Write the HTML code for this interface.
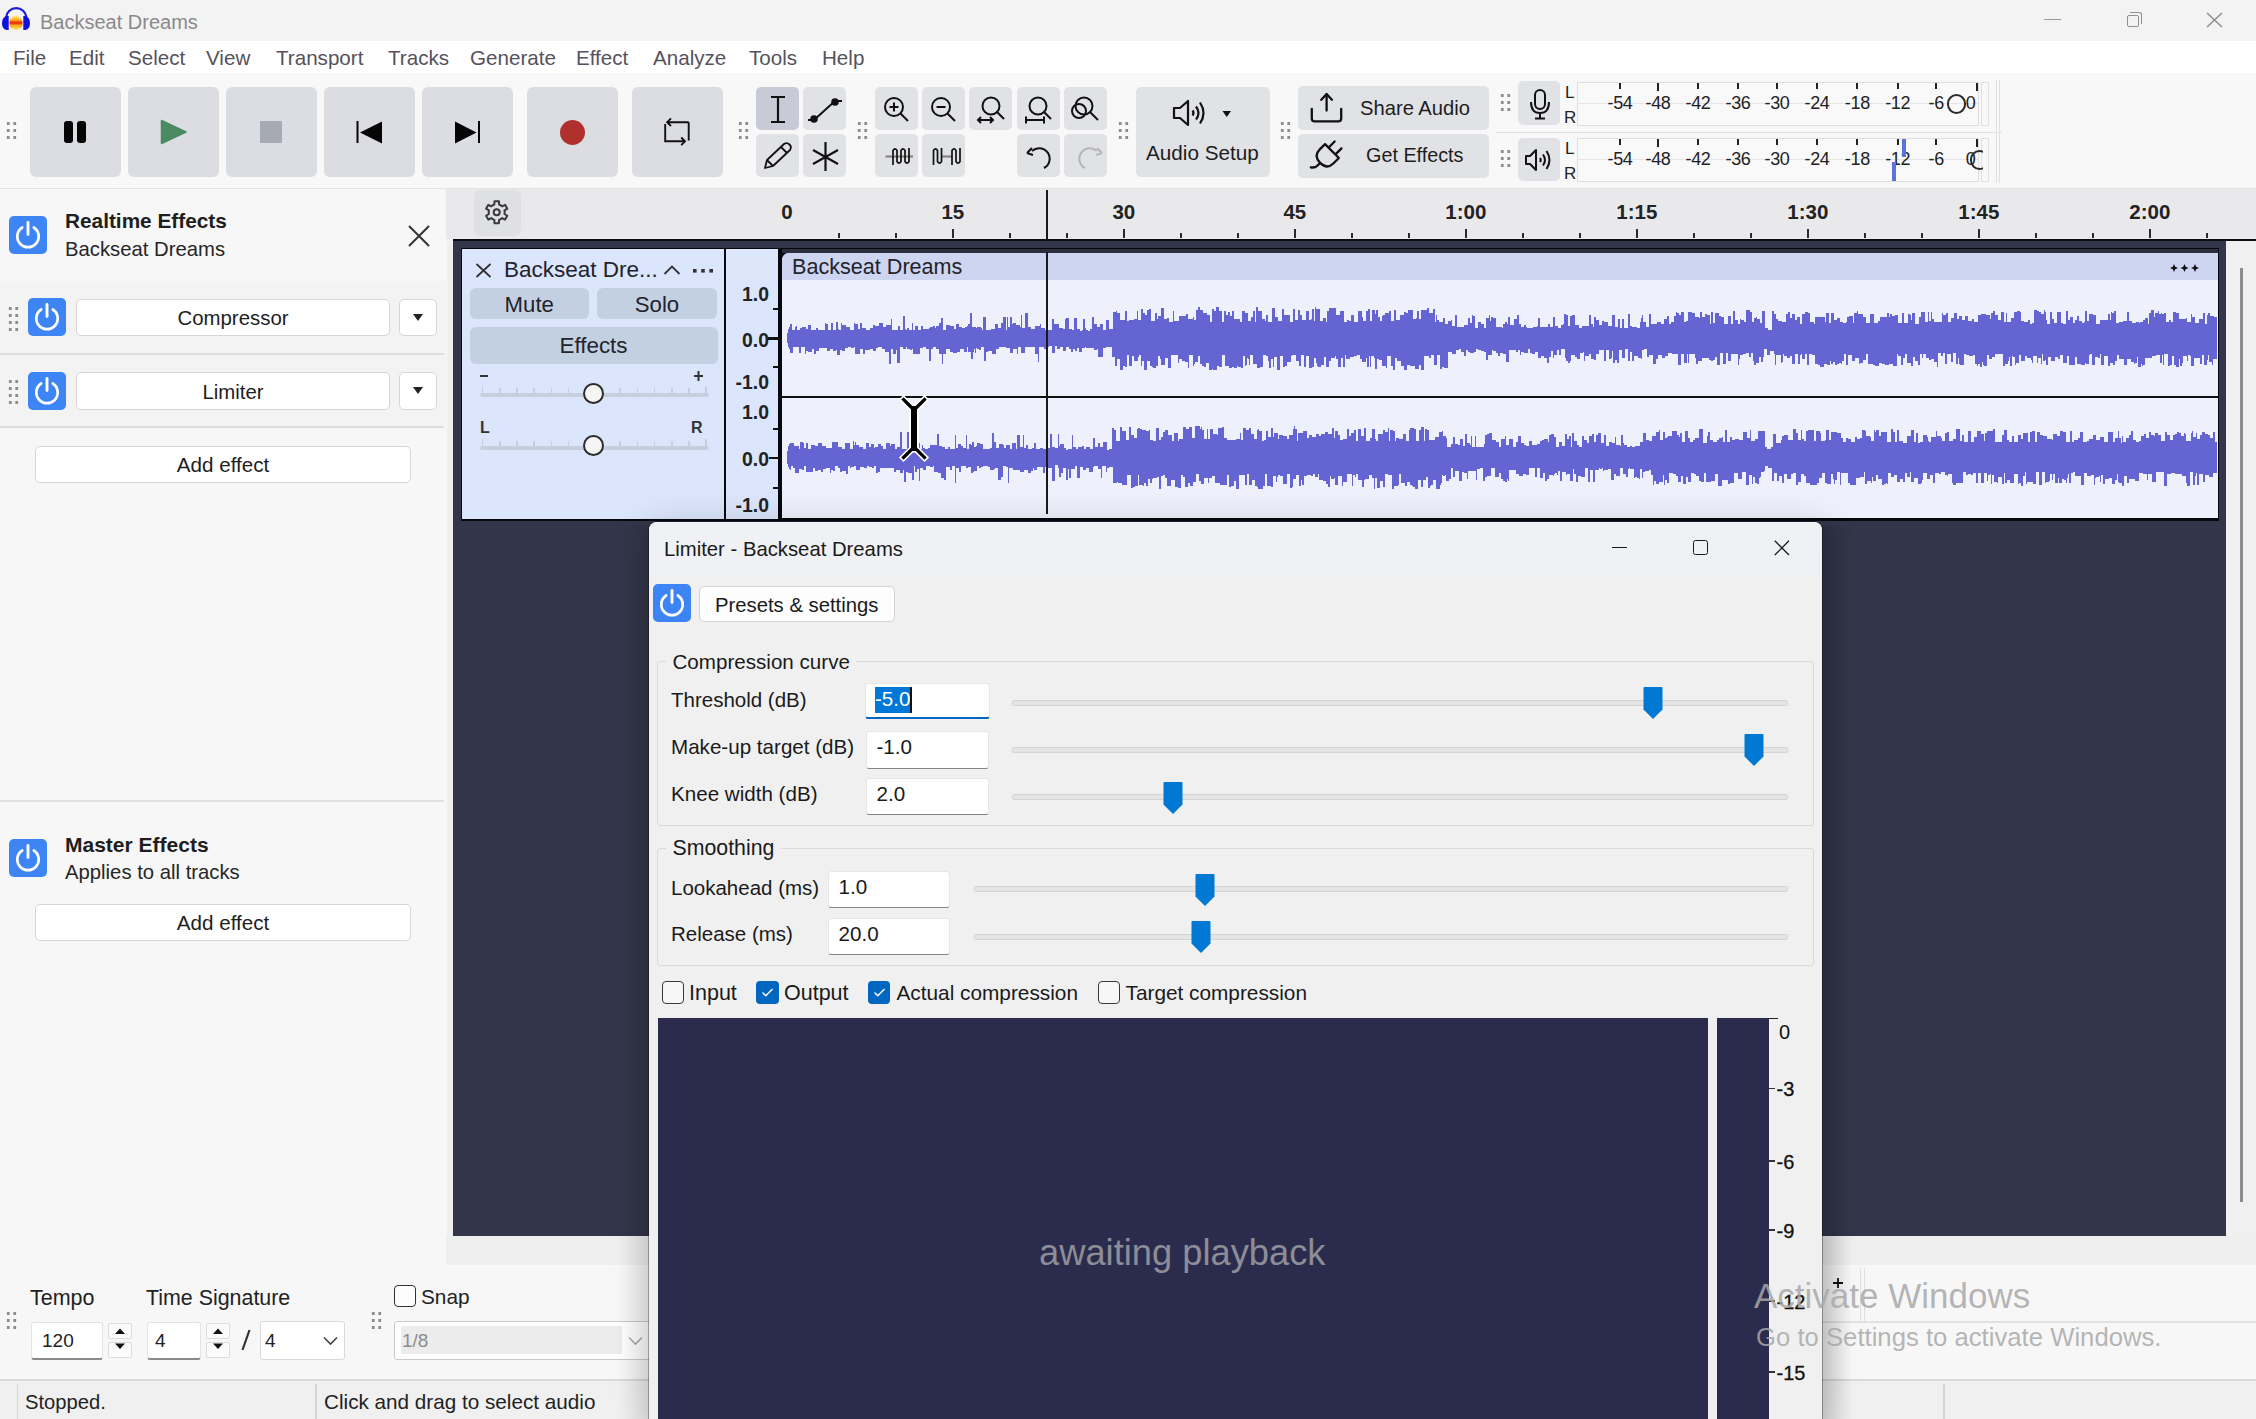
<!DOCTYPE html>
<html><head><meta charset="utf-8">
<style>
*{box-sizing:border-box;margin:0;padding:0}
html,body{width:2256px;height:1419px;overflow:hidden;background:#f7f7f7;font-family:"Liberation Sans",sans-serif;color:#1b1b1b}
.a{position:absolute}
.t{position:absolute;white-space:nowrap;font-size:20px;line-height:20px}
.btn{position:absolute;background:#dcdde2;border-radius:6px}
.tb{position:absolute;background:#e1e2e6;border-radius:5px}
.grip{position:absolute;width:12px;height:20px;background-image:radial-gradient(circle,#8d8d8d 1.6px,transparent 1.8px);background-size:6.5px 7px}
svg{position:absolute;overflow:visible}
.pw{background:#3d84f4;border-radius:5px}
.inp{background:#fff;border:1px solid #e3e3e3;border-bottom:2px solid #8a8a8a;border-radius:3px}
.spn{background:#fbfbfb;border:1px solid #dcdcdc;border-radius:2px}
.box{background:#fff;border:1.5px solid #d6d6d6;border-radius:5px}
</style></head><body>

<!-- TITLE BAR -->
<div class="a" style="left:0;top:0;width:2256px;height:41px;background:#f3f3f3"></div>
<svg style="left:0;top:0" width="32" height="36" viewBox="0 0 32 36">
  <defs><linearGradient id="wg" x1="0" y1="0" x2="0" y2="1"><stop offset="0" stop-color="#ffe66a"/><stop offset="0.35" stop-color="#f7a51e"/><stop offset="0.52" stop-color="#e81a0a"/><stop offset="0.68" stop-color="#f7a51e"/><stop offset="1" stop-color="#ffe66a"/></linearGradient></defs>
  <path d="M6 17.5 A10.3 10.5 0 0 1 26.5 17.5" fill="none" stroke="#1c1cd8" stroke-width="2.2"/>
  <path d="M8.7 16 H7.2 Q2 17 2 23 Q2 29.5 7.2 30 H8.7 Z" fill="#0f0fe0"/>
  <path d="M23.3 16 H24.8 Q30 17 30 23 Q30 29.5 24.8 30 H23.3 Z" fill="#0f0fe0"/>
  <path d="M9.5 21 L10.5 18 L11.5 20 L12.5 16 L13.5 19 L14.5 15 L15.5 18 L16.5 15 L17.5 19 L18.5 16 L19.5 20 L20.5 17 L21.5 20 L22.5 21 V25.5 L21.5 27.5 L19.5 29 L16 30 L12.5 29 L10.5 27.5 L9.5 25.5 Z" fill="url(#wg)"/>
</svg>
<div class="t" style="left:40px;top:12px;color:#8a8a8a">Backseat Dreams</div>
<div class="a" style="left:2044px;top:19px;width:17px;height:1px;background:#999"></div>
<div class="a" style="left:2127px;top:15px;width:12px;height:12px;border:1.5px solid #8f8f8f;border-radius:2px"></div>
<div class="a" style="left:2130px;top:12px;width:12px;height:12px;border-top:1.5px solid #8f8f8f;border-right:1.5px solid #8f8f8f;border-radius:0 3px 0 0"></div>
<svg style="left:2206px;top:12px" width="17" height="16"><path d="M1 1 L16 15 M16 1 L1 15" stroke="#8f8f8f" stroke-width="1.5"/></svg>

<!-- MENU BAR -->
<div class="a" style="left:0;top:41px;width:2256px;height:32px;background:#fff"></div>
<div class="t" style="left:13px;top:48px;font-size:20.6px;line-height:20.6px;color:#56525c">File</div>
<div class="t" style="left:69px;top:48px;font-size:20.6px;line-height:20.6px;color:#56525c">Edit</div>
<div class="t" style="left:128px;top:48px;font-size:20.6px;line-height:20.6px;color:#56525c">Select</div>
<div class="t" style="left:206px;top:48px;font-size:20.6px;line-height:20.6px;color:#56525c">View</div>
<div class="t" style="left:276px;top:48px;font-size:20.6px;line-height:20.6px;color:#56525c">Transport</div>
<div class="t" style="left:388px;top:48px;font-size:20.6px;line-height:20.6px;color:#56525c">Tracks</div>
<div class="t" style="left:470px;top:48px;font-size:20.6px;line-height:20.6px;color:#56525c">Generate</div>
<div class="t" style="left:576px;top:48px;font-size:20.6px;line-height:20.6px;color:#56525c">Effect</div>
<div class="t" style="left:653px;top:48px;font-size:20.6px;line-height:20.6px;color:#56525c">Analyze</div>
<div class="t" style="left:749px;top:48px;font-size:20.6px;line-height:20.6px;color:#56525c">Tools</div>
<div class="t" style="left:822px;top:48px;font-size:20.6px;line-height:20.6px;color:#56525c">Help</div>

<!-- TOOLBARS -->
<div class="a" style="left:0;top:73px;width:2256px;height:115px;background:#f8f8f9"></div>
<div class="a" style="left:0;top:188px;width:2256px;height:1px;background:#e2e2e4"></div>

<div class="grip" style="left:5px;top:120px"></div>
<div class="btn" style="left:30px;top:87px;width:91px;height:90px"></div>
<div class="btn" style="left:128px;top:87px;width:91px;height:90px"></div>
<div class="btn" style="left:226px;top:87px;width:91px;height:90px"></div>
<div class="btn" style="left:324px;top:87px;width:91px;height:90px"></div>
<div class="btn" style="left:422px;top:87px;width:91px;height:90px"></div>
<div class="btn" style="left:527px;top:87px;width:91px;height:90px"></div>
<div class="btn" style="left:632px;top:87px;width:91px;height:90px"></div>
<!-- pause -->
<div class="a" style="left:64px;top:121px;width:8.5px;height:22px;background:#050505;border-radius:3px"></div>
<div class="a" style="left:77px;top:121px;width:8.5px;height:22px;background:#050505;border-radius:3px"></div>
<!-- play -->
<svg style="left:160px;top:119px" width="28" height="26"><path d="M1.5 1.5 L26 13 L1.5 24.5 Z" fill="#4a8b63" stroke="#4a8b63" stroke-width="1.5" stroke-linejoin="round"/></svg>
<!-- stop -->
<div class="a" style="left:260px;top:121px;width:22px;height:22px;background:#a6aab3"></div>
<!-- skip start -->
<svg style="left:355px;top:120px" width="30" height="25"><rect x="1.5" y="1" width="2" height="22" fill="#050505"/><path d="M5 12.5 L27 1.5 V23.5 Z" fill="#050505"/></svg>
<!-- skip end -->
<svg style="left:453px;top:120px" width="30" height="25"><rect x="25" y="1" width="2" height="22" fill="#050505"/><path d="M2 1.5 L23.5 12.5 L2 23.5 Z" fill="#050505"/></svg>
<!-- record -->
<div class="a" style="left:559.5px;top:119.5px;width:25px;height:25px;background:#b0302e;border-radius:50%"></div>
<!-- loop -->
<svg style="left:660px;top:116px" width="34" height="34"><path d="M28.7 6.2 H7.2 M11 2.4 L7.2 6.2 L11 10 M28.7 6.2 V24.5 M5.2 8 V25.3 H25 M21.2 21.5 L25 25.3 L21.2 29.1" fill="none" stroke="#111" stroke-width="1.9"/></svg>

<div class="grip" style="left:737px;top:120px"></div>
<!-- tools -->
<div class="tb" style="left:756px;top:87px;width:43px;height:43px;background:#c8cbd6"></div>
<div class="tb" style="left:803px;top:87px;width:43px;height:43px"></div>
<div class="tb" style="left:756px;top:134px;width:43px;height:43px"></div>
<div class="tb" style="left:803px;top:134px;width:43px;height:43px"></div>
<svg style="left:768px;top:95px" width="20" height="30"><path d="M3 2 H17 M10 2 V27 M3 27 H17" stroke="#111" stroke-width="2.2" fill="none"/></svg>
<svg style="left:806px;top:96px" width="38" height="28"><path d="M2 24 H8 L29 5 H36" stroke="#111" stroke-width="2" fill="none"/><circle cx="8" cy="23" r="3.8" fill="#111"/><circle cx="29" cy="6" r="3.8" fill="#111"/></svg>
<svg style="left:762px;top:141px" width="32" height="30"><path d="M3 27 L5 19 L22 3 Q25 1 27.5 3.5 Q30 6 28 9 L11 25 Z M5 19 L11 25 M19 6 L25 12" stroke="#111" stroke-width="1.8" fill="none" stroke-linejoin="round"/></svg>
<svg style="left:811px;top:141px" width="30" height="32"><path d="M14.5 1 V30 M2 9 L27 23 M27 9 L2 23" stroke="#111" stroke-width="2.2" fill="none"/></svg>

<div class="grip" style="left:856px;top:120px"></div>
<!-- zoom group -->
<div class="tb" style="left:875px;top:87px;width:43px;height:43px"></div>
<div class="tb" style="left:922px;top:87px;width:43px;height:43px"></div>
<div class="tb" style="left:969px;top:87px;width:43px;height:43px"></div>
<div class="tb" style="left:1017px;top:87px;width:43px;height:43px"></div>
<div class="tb" style="left:1064px;top:87px;width:43px;height:43px"></div>
<div class="tb" style="left:875px;top:134px;width:43px;height:43px"></div>
<div class="tb" style="left:922px;top:134px;width:43px;height:43px"></div>
<div class="tb" style="left:1017px;top:134px;width:43px;height:43px"></div>
<div class="tb" style="left:1064px;top:134px;width:43px;height:43px"></div>
<svg style="left:882px;top:96px" width="30" height="30"><circle cx="12" cy="11" r="9" fill="none" stroke="#111" stroke-width="2"/><path d="M18.5 17.5 L26 25 M7.5 11 H16.5 M12 6.5 V15.5" stroke="#111" stroke-width="2" fill="none"/></svg>
<svg style="left:929px;top:96px" width="30" height="30"><circle cx="12" cy="11" r="9" fill="none" stroke="#111" stroke-width="2"/><path d="M18.5 17.5 L26 25 M7.5 11 H16.5" stroke="#111" stroke-width="2" fill="none"/></svg>
<svg style="left:976px;top:96px" width="32" height="30"><circle cx="15" cy="10" r="8.5" fill="none" stroke="#111" stroke-width="2"/><path d="M21 16 L28 23 M2 24 H17 M5 21 L2 24 L5 27 M14 21 L17 24 L14 27" stroke="#111" stroke-width="2" fill="none"/></svg>
<svg style="left:1023px;top:96px" width="32" height="30"><circle cx="15" cy="10" r="8.5" fill="none" stroke="#111" stroke-width="2"/><path d="M21 16 L28 23 M3 24 H21 M3 20.5 V27.5 M21 20.5 V27.5" stroke="#111" stroke-width="2" fill="none"/></svg>
<svg style="left:1070px;top:96px" width="32" height="30"><circle cx="14" cy="10" r="8.5" fill="none" stroke="#111" stroke-width="2"/><path d="M20 16 L28 24" stroke="#111" stroke-width="2"/><circle cx="9" cy="15" r="7" fill="none" stroke="#111" stroke-width="2"/></svg>
<svg style="left:883px;top:145px" width="32" height="22"><path d="M2.5 11.5 H30" stroke="#858585" stroke-width="2.2"/><path d="M10 20 V5.5 Q12 2.2 14 5.5 V16.5 Q16 19.8 18 16.5 V5.5 Q20 2.2 22 5.5 V16.5 Q24 19.8 26 16.5 V3" stroke="#111" stroke-width="1.7" fill="none"/></svg>
<svg style="left:930px;top:145px" width="32" height="22"><path d="M11.5 11.5 H22" stroke="#858585" stroke-width="2.2"/><path d="M3.5 20 V5.5 Q5.5 2.2 7.5 5.5 V16.5 Q9.5 19.8 11.5 16.5 V3 M22 20 V5.5 Q24 2.2 26 5.5 V16.5 Q28 19.8 30 16.5 V3" stroke="#111" stroke-width="1.7" fill="none"/></svg>
<svg style="left:1025px;top:142px" width="32" height="28"><path d="M7 9 A10.5 10.5 0 1 1 19 26" fill="none" stroke="#111" stroke-width="2"/><path d="M2 11 L7 6 M2 11 L8 13" stroke="#111" stroke-width="2" fill="none"/></svg>
<svg style="left:1072px;top:142px" width="32" height="28"><path d="M25 9 A10.5 10.5 0 1 0 13 26" fill="none" stroke="#b6b6b8" stroke-width="2"/><path d="M30 11 L25 6 M30 11 L24 13" stroke="#b6b6b8" stroke-width="2" fill="none"/></svg>

<div class="grip" style="left:1117px;top:120px"></div>
<!-- audio setup -->
<div class="tb" style="left:1136px;top:87px;width:134px;height:90px"></div>
<svg style="left:1171px;top:98px" width="64" height="32"><path d="M3 10 H9 L17 3 V27 L9 20 H3 Z" fill="none" stroke="#111" stroke-width="2.2" stroke-linejoin="round"/><path d="M21.5 12.5 Q23.5 15 21.5 17.5 M25 8.5 Q30 15 25 21.5 M29 4.5 Q36 15 29 25.5" fill="none" stroke="#111" stroke-width="2.2"/><path d="M51.5 13 H60 L55.75 19 Z" fill="#111"/></svg>
<div class="t" style="left:1146px;top:143px;font-size:20.7px;line-height:20.7px;color:#1d1d1d">Audio Setup</div>

<div class="grip" style="left:1279px;top:120px"></div>
<!-- share / get effects -->
<div class="tb" style="left:1298px;top:86px;width:191px;height:44px"></div>
<div class="tb" style="left:1298px;top:134px;width:191px;height:44px"></div>
<svg style="left:1309px;top:91px" width="36" height="34"><path d="M2.8 18 V27.5 Q2.8 30.3 5.6 30.3 H29.4 Q32.2 30.3 32.2 27.5 V18 M17.6 3.5 V19.5" fill="none" stroke="#111" stroke-width="2.3" stroke-linecap="round"/><path d="M12.3 8.8 L17.6 3 L22.9 8.8" fill="none" stroke="#111" stroke-width="2.3" stroke-linecap="round" stroke-linejoin="round"/></svg>
<div class="t" style="left:1360px;top:98px;font-size:20.2px;line-height:20.2px;color:#1d1d1d">Share Audio</div>
<svg style="left:1308px;top:136px" width="38" height="38"><g transform="translate(21.5 17.5) rotate(45) scale(1.15)" fill="none" stroke="#111" stroke-width="2" stroke-linecap="round" stroke-linejoin="round"><path d="M-8.5 -3 H8.5 V3.5 Q8.5 11.5 0 11.5 Q-8.5 11.5 -8.5 3.5 Z M-4.2 -3.5 V-10.5 M4.2 -3.5 V-10.5 M0 11.5 V15 Q0 18 -3 20"/></g></svg>
<div class="t" style="left:1366px;top:146px;font-size:19.8px;line-height:19.8px;color:#1d1d1d">Get Effects</div>

<div class="a" style="left:1496px;top:132px;width:506px;height:1px;background:#e2e2e2"></div>
<div class="grip" style="left:1499px;top:92px"></div>
<div class="grip" style="left:1499px;top:148px"></div>
<div class="tb" style="left:1518px;top:81px;width:42px;height:44px"></div>
<div class="tb" style="left:1518px;top:138px;width:42px;height:43px"></div>
<svg style="left:1529px;top:88px" width="22" height="32"><rect x="6" y="2" width="10" height="19" rx="5" fill="none" stroke="#111" stroke-width="2"/><path d="M2 14 Q2 25 11 25 Q20 25 20 14 M11 25 V30 M6 30.5 H16" fill="none" stroke="#111" stroke-width="2"/></svg>
<svg style="left:1524px;top:148px" width="32" height="24"><path d="M2 8 H6 L12 2 V22 L6 16 H2 Z" fill="none" stroke="#111" stroke-width="2" stroke-linejoin="round"/><path d="M16 10 Q17.5 12 16 14 M19 6.5 Q23 12 19 17.5 M22.5 3 Q28.5 12 22.5 21" fill="none" stroke="#111" stroke-width="2"/></svg>
<div class="a" style="left:1577px;top:82px;width:402px;height:44px;border:1.5px solid #dedede;background:#f9f9fa"></div>
<div class="a" style="left:1981px;top:82px;width:8px;height:44px;border:1.5px solid #e2e2e2"></div>
<div class="a" style="left:1578px;top:102.9px;width:400px;height:1.5px;background:#e6e6e6"></div>
<div class="t" style="left:1565px;top:84px;font-size:17px;line-height:17px;color:#222">L</div>
<div class="t" style="left:1564px;top:109px;font-size:17px;line-height:17px;color:#222">R</div>
<div class="a" style="left:1619px;top:83px;width:2px;height:6px;background:#222"></div>
<div class="t" style="left:1580px;width:80px;text-align:center;top:94px;font-size:18px;line-height:18px;color:#222;letter-spacing:-0.3px">-54</div>
<div class="a" style="left:1657px;top:83px;width:2px;height:8px;background:#222"></div>
<div class="t" style="left:1618px;width:80px;text-align:center;top:94px;font-size:18px;line-height:18px;color:#222;letter-spacing:-0.3px">-48</div>
<div class="a" style="left:1697px;top:83px;width:2px;height:6px;background:#222"></div>
<div class="t" style="left:1658px;width:80px;text-align:center;top:94px;font-size:18px;line-height:18px;color:#222;letter-spacing:-0.3px">-42</div>
<div class="a" style="left:1737px;top:83px;width:2px;height:6px;background:#222"></div>
<div class="t" style="left:1698px;width:80px;text-align:center;top:94px;font-size:18px;line-height:18px;color:#222;letter-spacing:-0.3px">-36</div>
<div class="a" style="left:1776px;top:83px;width:2px;height:6px;background:#222"></div>
<div class="t" style="left:1737px;width:80px;text-align:center;top:94px;font-size:18px;line-height:18px;color:#222;letter-spacing:-0.3px">-30</div>
<div class="a" style="left:1816px;top:83px;width:2px;height:6px;background:#222"></div>
<div class="t" style="left:1777px;width:80px;text-align:center;top:94px;font-size:18px;line-height:18px;color:#222;letter-spacing:-0.3px">-24</div>
<div class="a" style="left:1856.4px;top:83px;width:2px;height:6px;background:#222"></div>
<div class="t" style="left:1817.4px;width:80px;text-align:center;top:94px;font-size:18px;line-height:18px;color:#222;letter-spacing:-0.3px">-18</div>
<div class="a" style="left:1896.7px;top:83px;width:2px;height:6px;background:#222"></div>
<div class="t" style="left:1857.7px;width:80px;text-align:center;top:94px;font-size:18px;line-height:18px;color:#222;letter-spacing:-0.3px">-12</div>
<div class="a" style="left:1935.3px;top:83px;width:2px;height:6px;background:#222"></div>
<div class="t" style="left:1896.3px;width:80px;text-align:center;top:94px;font-size:18px;line-height:18px;color:#222;letter-spacing:-0.3px">-6</div>
<div class="a" style="left:1975.5px;top:83px;width:2px;height:8px;background:#222"></div>
<div class="t" style="left:1930.5px;width:80px;text-align:center;top:94px;font-size:18px;line-height:18px;color:#222;letter-spacing:-0.3px">0</div>
<div class="a" style="left:1577px;top:137.5px;width:402px;height:44.0px;border:1.5px solid #dedede;background:#f9f9fa"></div>
<div class="a" style="left:1981px;top:137.5px;width:8px;height:44.0px;border:1.5px solid #e2e2e2"></div>
<div class="a" style="left:1578px;top:158.5px;width:400px;height:1.5px;background:#e6e6e6"></div>
<div class="t" style="left:1565px;top:139.5px;font-size:17px;line-height:17px;color:#222">L</div>
<div class="t" style="left:1564px;top:164.5px;font-size:17px;line-height:17px;color:#222">R</div>
<div class="a" style="left:1619px;top:138.5px;width:2px;height:6px;background:#222"></div>
<div class="t" style="left:1580px;width:80px;text-align:center;top:149.5px;font-size:18px;line-height:18px;color:#222;letter-spacing:-0.3px">-54</div>
<div class="a" style="left:1657px;top:138.5px;width:2px;height:8px;background:#222"></div>
<div class="t" style="left:1618px;width:80px;text-align:center;top:149.5px;font-size:18px;line-height:18px;color:#222;letter-spacing:-0.3px">-48</div>
<div class="a" style="left:1697px;top:138.5px;width:2px;height:6px;background:#222"></div>
<div class="t" style="left:1658px;width:80px;text-align:center;top:149.5px;font-size:18px;line-height:18px;color:#222;letter-spacing:-0.3px">-42</div>
<div class="a" style="left:1737px;top:138.5px;width:2px;height:6px;background:#222"></div>
<div class="t" style="left:1698px;width:80px;text-align:center;top:149.5px;font-size:18px;line-height:18px;color:#222;letter-spacing:-0.3px">-36</div>
<div class="a" style="left:1776px;top:138.5px;width:2px;height:6px;background:#222"></div>
<div class="t" style="left:1737px;width:80px;text-align:center;top:149.5px;font-size:18px;line-height:18px;color:#222;letter-spacing:-0.3px">-30</div>
<div class="a" style="left:1816px;top:138.5px;width:2px;height:6px;background:#222"></div>
<div class="t" style="left:1777px;width:80px;text-align:center;top:149.5px;font-size:18px;line-height:18px;color:#222;letter-spacing:-0.3px">-24</div>
<div class="a" style="left:1856.4px;top:138.5px;width:2px;height:6px;background:#222"></div>
<div class="t" style="left:1817.4px;width:80px;text-align:center;top:149.5px;font-size:18px;line-height:18px;color:#222;letter-spacing:-0.3px">-18</div>
<div class="a" style="left:1896.7px;top:138.5px;width:2px;height:6px;background:#222"></div>
<div class="t" style="left:1857.7px;width:80px;text-align:center;top:149.5px;font-size:18px;line-height:18px;color:#222;letter-spacing:-0.3px">-12</div>
<div class="a" style="left:1935.3px;top:138.5px;width:2px;height:6px;background:#222"></div>
<div class="t" style="left:1896.3px;width:80px;text-align:center;top:149.5px;font-size:18px;line-height:18px;color:#222;letter-spacing:-0.3px">-6</div>
<div class="a" style="left:1975.5px;top:138.5px;width:2px;height:8px;background:#222"></div>
<div class="t" style="left:1930.5px;width:80px;text-align:center;top:149.5px;font-size:18px;line-height:18px;color:#222;letter-spacing:-0.3px">0</div>
<div class="a" style="left:1946.5px;top:94px;width:19.5px;height:19.5px;border:2px solid #2a2a2a;border-radius:50%"></div>
<div class="a" style="left:1902.4px;top:139px;width:3.5px;height:18px;background:#5d72da"></div>
<div class="a" style="left:1892px;top:162px;width:3.5px;height:18.5px;background:#5d72da"></div>
<div style="position:absolute;left:1960px;top:140px;width:23px;height:40px;overflow:hidden"><div class="a" style="left:9.5px;top:10px;width:19.5px;height:19.5px;border:2px solid #2a2a2a;border-radius:50%"></div></div>
<div class="a" style="left:1996px;top:80px;width:1px;height:103px;background:#e0e0e0"></div>
<div class="a" style="left:1999px;top:80px;width:1px;height:103px;background:#e0e0e0"></div>


<!-- LEFT PANEL -->
<div class="a" style="left:0;top:189px;width:446px;height:1076px;background:#f7f7f7"></div>

<div class="a" style="left:0;top:281px;width:446px;height:146px;background:#f3f3f3"></div>
<!-- header -->
<div class="a pw" style="left:9px;top:216px;width:38px;height:38px"><svg style="left:0;top:0" width="38" height="38"><path d="M13.2 11.5 A10.7 10.7 0 1 0 24.8 11.5" fill="none" stroke="#fff" stroke-width="2.7" stroke-linecap="round"/><path d="M19 6.5 V18.5" stroke="#fff" stroke-width="2.9" stroke-linecap="round"/></svg></div>
<div class="t" style="left:65px;top:211px;font-size:20.8px;line-height:20.8px;font-weight:bold;color:#1e1e1e">Realtime Effects</div>
<div class="t" style="left:65px;top:239px;font-size:20.3px;line-height:20.3px;color:#262626">Backseat Dreams</div>
<svg style="left:407px;top:224px" width="24" height="24"><path d="M2 2 L22 22 M22 2 L2 22" stroke="#333" stroke-width="2"/></svg>
<!-- compressor row -->
<div class="grip" style="left:7px;top:305px;height:26px"></div>
<div class="a pw" style="left:28px;top:298px;width:38px;height:38px"><svg style="left:0;top:0" width="38" height="38"><path d="M13.2 11.5 A10.7 10.7 0 1 0 24.8 11.5" fill="none" stroke="#fff" stroke-width="2.7" stroke-linecap="round"/><path d="M19 6.5 V18.5" stroke="#fff" stroke-width="2.9" stroke-linecap="round"/></svg></div>
<div class="a box" style="left:76px;top:299px;width:314px;height:37px"></div>
<div class="t" style="left:76px;width:314px;text-align:center;top:308px;font-size:20.4px;line-height:20.4px;color:#1e1e1e">Compressor</div>
<div class="a box" style="left:399px;top:299px;width:38px;height:37px"></div>
<svg style="left:413px;top:314px" width="11" height="8"><path d="M0 0 H10 L5 7 Z" fill="#222"/></svg>
<div class="a" style="left:0;top:353px;width:444px;height:1.5px;background:#dedede"></div>
<!-- limiter row -->
<div class="grip" style="left:7px;top:378px;height:26px"></div>
<div class="a pw" style="left:28px;top:372px;width:38px;height:38px"><svg style="left:0;top:0" width="38" height="38"><path d="M13.2 11.5 A10.7 10.7 0 1 0 24.8 11.5" fill="none" stroke="#fff" stroke-width="2.7" stroke-linecap="round"/><path d="M19 6.5 V18.5" stroke="#fff" stroke-width="2.9" stroke-linecap="round"/></svg></div>
<div class="a box" style="left:76px;top:372px;width:314px;height:38px"></div>
<div class="t" style="left:76px;width:314px;text-align:center;top:382px;font-size:20.4px;line-height:20.4px;color:#1e1e1e">Limiter</div>
<div class="a box" style="left:399px;top:372px;width:38px;height:38px"></div>
<svg style="left:413px;top:387px" width="11" height="8"><path d="M0 0 H10 L5 7 Z" fill="#222"/></svg>
<div class="a" style="left:0;top:426px;width:444px;height:1.5px;background:#dedede"></div>
<!-- add effect -->
<div class="a box" style="left:35px;top:446px;width:376px;height:37px"></div>
<div class="t" style="left:35px;width:376px;text-align:center;top:455px;font-size:20.6px;line-height:20.6px;color:#1e1e1e">Add effect</div>
<!-- master -->
<div class="a" style="left:0;top:800px;width:444px;height:1.5px;background:#e2e2e2"></div>
<div class="a pw" style="left:9px;top:839px;width:38px;height:38px"><svg style="left:0;top:0" width="38" height="38"><path d="M13.2 11.5 A10.7 10.7 0 1 0 24.8 11.5" fill="none" stroke="#fff" stroke-width="2.7" stroke-linecap="round"/><path d="M19 6.5 V18.5" stroke="#fff" stroke-width="2.9" stroke-linecap="round"/></svg></div>
<div class="t" style="left:65px;top:834px;font-size:21px;line-height:21px;font-weight:bold;color:#1e1e1e">Master Effects</div>
<div class="t" style="left:65px;top:862px;font-size:20.3px;line-height:20.3px;color:#262626">Applies to all tracks</div>
<div class="a box" style="left:35px;top:904px;width:376px;height:37px"></div>
<div class="t" style="left:35px;width:376px;text-align:center;top:913px;font-size:20.6px;line-height:20.6px;color:#1e1e1e">Add effect</div>


<!-- RULER -->
<div class="a" style="left:446px;top:189px;width:1810px;height:50px;background:#e9e9eb"></div>
<div class="a" style="left:474px;top:190px;width:47px;height:46px;background:#dfe0e4;border-radius:6px"></div>
<svg style="left:474px;top:190px" width="47" height="46"><path d="M20.34 14.56 L20.47 11.22 L24.93 11.22 L25.06 14.56 L26.70 15.27 L28.14 16.33 L31.09 14.78 L33.32 18.64 L30.50 20.43 L30.70 22.20 L30.50 23.97 L33.32 25.76 L31.09 29.62 L28.14 28.07 L26.70 29.13 L25.06 29.84 L24.93 33.18 L20.47 33.18 L20.34 29.84 L18.70 29.13 L17.26 28.07 L14.31 29.62 L12.08 25.76 L14.90 23.97 L14.70 22.20 L14.90 20.43 L12.08 18.64 L14.31 14.78 L17.26 16.33 L18.70 15.27 Z" fill="none" stroke="#3a3a3a" stroke-width="2" stroke-linejoin="round"/><circle cx="22.69999999999999" cy="22.19999999999999" r="3" fill="none" stroke="#3a3a3a" stroke-width="2"/></svg>
<div class="t" style="left:781.3px;top:202px;font-size:20.5px;line-height:20.5px;font-weight:bold;color:#222">0</div>
<div class="a" style="left:837.8px;top:232.5px;width:2px;height:5.5px;background:#2a2a2a"></div>
<div class="a" style="left:894.8px;top:232.5px;width:2px;height:5.5px;background:#2a2a2a"></div>
<div class="a" style="left:951.8px;top:229px;width:2px;height:9px;background:#2a2a2a"></div>
<div class="t" style="left:892.8px;width:120px;text-align:center;top:202px;font-size:20.5px;line-height:20.5px;font-weight:bold;color:#222">15</div>
<div class="a" style="left:1008.8px;top:232.5px;width:2px;height:5.5px;background:#2a2a2a"></div>
<div class="a" style="left:1065.8px;top:232.5px;width:2px;height:5.5px;background:#2a2a2a"></div>
<div class="a" style="left:1122.8px;top:229px;width:2px;height:9px;background:#2a2a2a"></div>
<div class="t" style="left:1063.8px;width:120px;text-align:center;top:202px;font-size:20.5px;line-height:20.5px;font-weight:bold;color:#222">30</div>
<div class="a" style="left:1179.8px;top:232.5px;width:2px;height:5.5px;background:#2a2a2a"></div>
<div class="a" style="left:1236.8px;top:232.5px;width:2px;height:5.5px;background:#2a2a2a"></div>
<div class="a" style="left:1293.8px;top:229px;width:2px;height:9px;background:#2a2a2a"></div>
<div class="t" style="left:1234.8px;width:120px;text-align:center;top:202px;font-size:20.5px;line-height:20.5px;font-weight:bold;color:#222">45</div>
<div class="a" style="left:1350.8px;top:232.5px;width:2px;height:5.5px;background:#2a2a2a"></div>
<div class="a" style="left:1407.8px;top:232.5px;width:2px;height:5.5px;background:#2a2a2a"></div>
<div class="a" style="left:1464.8px;top:229px;width:2px;height:9px;background:#2a2a2a"></div>
<div class="t" style="left:1405.8px;width:120px;text-align:center;top:202px;font-size:20.5px;line-height:20.5px;font-weight:bold;color:#222">1:00</div>
<div class="a" style="left:1521.8px;top:232.5px;width:2px;height:5.5px;background:#2a2a2a"></div>
<div class="a" style="left:1578.8px;top:232.5px;width:2px;height:5.5px;background:#2a2a2a"></div>
<div class="a" style="left:1635.8px;top:229px;width:2px;height:9px;background:#2a2a2a"></div>
<div class="t" style="left:1576.8px;width:120px;text-align:center;top:202px;font-size:20.5px;line-height:20.5px;font-weight:bold;color:#222">1:15</div>
<div class="a" style="left:1692.8px;top:232.5px;width:2px;height:5.5px;background:#2a2a2a"></div>
<div class="a" style="left:1749.8px;top:232.5px;width:2px;height:5.5px;background:#2a2a2a"></div>
<div class="a" style="left:1806.8px;top:229px;width:2px;height:9px;background:#2a2a2a"></div>
<div class="t" style="left:1747.8px;width:120px;text-align:center;top:202px;font-size:20.5px;line-height:20.5px;font-weight:bold;color:#222">1:30</div>
<div class="a" style="left:1863.8px;top:232.5px;width:2px;height:5.5px;background:#2a2a2a"></div>
<div class="a" style="left:1920.8px;top:232.5px;width:2px;height:5.5px;background:#2a2a2a"></div>
<div class="a" style="left:1977.8px;top:229px;width:2px;height:9px;background:#2a2a2a"></div>
<div class="t" style="left:1918.8px;width:120px;text-align:center;top:202px;font-size:20.5px;line-height:20.5px;font-weight:bold;color:#222">1:45</div>
<div class="a" style="left:2034.8px;top:232.5px;width:2px;height:5.5px;background:#2a2a2a"></div>
<div class="a" style="left:2091.8px;top:232.5px;width:2px;height:5.5px;background:#2a2a2a"></div>
<div class="a" style="left:2148.8px;top:229px;width:2px;height:9px;background:#2a2a2a"></div>
<div class="t" style="left:2089.8px;width:120px;text-align:center;top:202px;font-size:20.5px;line-height:20.5px;font-weight:bold;color:#222">2:00</div>
<div class="a" style="left:2205.8px;top:232.5px;width:2px;height:5.5px;background:#2a2a2a"></div>
<div class="a" style="left:1046px;top:190px;width:2.2px;height:50px;background:#1a1a1a"></div>

<!-- TRACK AREA -->
<div class="a" style="left:453px;top:239px;width:1773px;height:997px;background:#33364a"></div>
<div class="a" style="left:453px;top:239px;width:1803px;height:2px;background:#0c0d14"></div>
<div class="a" style="left:2226px;top:241px;width:30px;height:995px;background:#f0f0f0"></div>
<div class="a" style="left:2240px;top:268px;width:3px;height:934px;background:#8c8c8c"></div>
<div class="a" style="left:446px;top:1236px;width:1810px;height:29px;background:#efefef"></div>
<div class="a" style="left:446.5px;top:239px;width:6.5px;height:997px;background:#f0f0f0"></div>

<!-- track frame -->
<div class="a" style="left:460.5px;top:247.5px;width:1758.5px;height:273px;background:#08090e"></div>
<div class="a" style="left:462px;top:249.4px;width:262.2px;height:269.3px;background:#dbe5fb"></div>
<div class="a" style="left:726.3px;top:249.4px;width:52.2px;height:269.3px;background:#dbe5fb"></div>
<div class="a" style="left:726.3px;top:249.4px;width:52.2px;height:30px;background:#dde7fc"></div>
<div class="a" style="left:782px;top:249.4px;width:1435.7px;height:3.5px;background:#2b2e3d"></div>
<div class="a" style="left:782px;top:252.9px;width:1435.7px;height:265px;background:#eef0fc;border-top-left-radius:7px"></div>
<div class="a" style="left:782px;top:252.9px;width:1435.7px;height:27.5px;background:#cdd5f0;border-top-left-radius:7px"></div>
<svg style="left:0;top:0" width="2256" height="600"><path d="M787 338V333h1V329h1V327h1V324h2V330h3V327h1V326h1V330h3V328h2V327h4V329h2V325h3V330h5V328h2V330h7V323h1V324h2V330h3V323h2V330h3V322h2V329h1V330h2V323h1V325h4V327h4V330h4V323h1V324h3V329h2V323h2V328h4V330h4V328h3V325h2V326h4V323h4V327h3V325h5V319h1V330h6V326h2V330h3V316h2V329h1V330h1V328h2V330h3V323h1V330h2V326h3V330h3V326h2V329h6V328h1V327h3V326h2V328h1V326h3V323h2V318h2V330h3V325h4V326h4V329h2V324h3V327h3V328h3V327h2V326h1V324h2V313h2V327h4V328h1V327h4V328h1V330h1V317h3V330h5V329h4V324h3V328h3V323h2V317h3V330h1V317h1V327h2V317h2V324h1V323h3V325h4V327h1V315h1V328h3V313h3V327h3V329h4V326h5V324h1V328h4V330h7V319h2V324h5V328h4V329h2V319h1V318h3V329h3V330h2V318h3V329h3V331h2V330h1V319h2V328h1V330h2V331h2V329h2V317h2V324h3V327h3V324h3V330h3V320h3V329h4V312h3V311h1V313h3V320h5V311h2V321h2V320h5V319h3V311h1V320h3V309h2V313h2V315h2V310h2V309h2V321h4V313h2V319h1V316h3V308h3V319h3V318h2V322h4V311h1V321h5V316h7V314h2V319h5V317h1V320h2V310h2V307h2V310h3V313h4V315h3V322h2V309h2V311h2V307h3V311h3V322h2V311h2V315h2V312h2V316h2V311h2V319h6V322h2V311h3V313h3V321h3V317h2V311h2V322h1V307h2V311h4V319h3V321h1V315h2V322h4V308h3V317h3V321h4V309h2V315h6V322h3V309h2V320h3V310h2V315h2V320h4V311h3V320h2V319h1V309h2V321h1V307h1V309h4V321h3V318h3V322h1V311h2V308h7V315h4V311h4V322h3V320h2V321h2V315h3V322h4V311h4V317h1V321h3V311h2V309h2V321h2V310h3V314h1V310h2V317h2V321h2V316h1V315h2V313h4V311h2V321h3V310h2V320h4V315h4V312h2V313h2V310h5V319h3V318h1V311h2V319h2V310h6V308h2V313h4V309h2V322h1V315h1V320h2V322h4V318h2V324h3V321h3V320h1V326h3V315h2V327h7V325h4V318h2V323h2V315h1V316h2V328h3V322h3V324h3V328h2V318h3V315h1V321h1V317h2V318h3V327h6V328h1V324h2V322h2V324h1V317h2V325h4V319h3V315h2V324h2V327h3V325h2V327h1V328h6V327h4V326h1V318h2V327h8V324h2V327h3V317h2V326h3V328h3V325h2V324h1V314h2V315h2V326h2V316h2V315h3V325h4V328h3V326h7V315h2V324h2V327h1V317h2V320h3V325h3V321h2V322h4V326h4V315h3V327h3V319h2V328h2V319h2V328h4V314h2V326h2V327h5V328h3V322h1V318h1V315h1V322h3V327h3V314h2V324h6V322h4V324h3V319h3V316h2V324h2V322h3V316h2V312h1V313h2V315h2V312h3V322h2V321h2V312h4V313h3V317h4V318h1V312h2V317h3V314h2V315h3V324h1V312h2V323h2V313h4V316h2V317h3V324h4V316h3V324h2V311h2V320h3V324h2V319h1V320h3V322h2V310h4V312h2V322h2V318h2V317h1V319h3V323h2V311h3V328h3V330h4V311h2V314h2V319h2V321h4V322h4V314h2V312h2V318h2V314h3V320h2V317h3V324h2V314h3V312h3V313h2V322h4V324h1V317h10V322h1V313h3V323h2V313h3V320h3V318h3V322h3V323h3V322h1V317h2V316h4V323h1V313h3V311h1V314h5V317h3V323h4V314h4V323h4V321h2V317h7V313h2V317h1V314h2V316h3V315h3V323h4V313h2V323h4V314h2V315h1V320h1V313h3V324h4V317h2V312h4V322h3V312h1V321h2V312h1V319h2V322h8V313h1V315h3V313h2V322h3V318h3V313h3V319h2V316h3V320h3V316h3V321h4V319h2V322h4V315h3V314h5V315h4V319h1V313h2V311h2V315h3V320h3V312h3V322h2V313h1V322h4V318h3V312h3V311h3V312h1V321h3V322h4V320h2V324h2V323h2V310h3V311h2V312h2V314h3V310h1V312h1V320h1V324h3V312h2V319h2V323h3V312h4V323h2V324h3V311h2V320h2V317h3V323h2V320h2V316h2V321h3V323h2V322h1V311h2V321h2V314h4V315h3V324h4V320h8V314h2V320h1V312h1V313h2V311h2V323h3V322h4V321h4V312h2V321h3V323h4V322h3V323h1V322h3V320h2V318h3V324h1V313h2V310h3V317h1V313h3V311h1V314h2V313h1V314h2V313h2V322h3V320h2V322h2V312h3V313h3V319h7V318h1V322h4V314h1V317h3V323h4V319h4V313h2V324h2V315h1V313h2V316h4V317h3V359h-4V365h-1V362h-3V355h-1V360h-1V365h-3V355h-2V364h-2V358h-6V366h-3V356h-1V355h-2V361h-1V356h-4V363h-1V366h-2V359h-1V367h-3V365h-2V356h-2V365h-2V366h-2V354h-4V365h-1V355h-1V363h-2V355h-4V356h-4V358h-7V365h-2V366h-1V364h-1V367h-3V357h-1V363h-2V364h-1V362h-3V359h-4V365h-3V359h-5V355h-2V361h-2V365h-2V363h-3V366h-2V356h-4V365h-3V354h-1V358h-2V357h-3V365h-3V354h-2V355h-1V364h-3V363h-1V365h-4V364h-4V357h-2V365h-6V356h-2V363h-4V355h-3V359h-2V357h-3V361h-4V357h-3V365h-2V360h-1V361h-2V354h-1V364h-1V358h-3V363h-1V356h-4V363h-1V360h-1V358h-4V356h-2V361h-4V355h-2V363h-3V365h-1V357h-2V356h-1V366h-2V357h-1V361h-1V364h-3V366h-2V354h-8V357h-3V359h-3V355h-2V366h-3V365h-1V362h-1V367h-2V364h-2V366h-1V364h-2V355h-2V356h-4V355h-3V354h-2V365h-4V364h-1V358h-1V364h-2V353h-3V362h-2V354h-4V364h-2V353h-2V356h-2V353h-3V367h-1V362h-3V359h-3V360h-2V358h-3V354h-3V358h-1V354h-2V365h-2V361h-3V357h-2V366h-2V363h-4V354h-2V358h-2V365h-2V356h-3V354h-1V366h-4V364h-4V365h-4V364h-3V363h-3V366h-4V365h-2V364h-5V354h-2V360h-3V363h-3V364h-1V358h-4V361h-3V355h-4V365h-2V354h-2V361h-2V364h-1V363h-2V364h-2V365h-2V362h-2V364h-2V361h-1V365h-3V364h-3V367h-4V365h-2V364h-3V355h-3V354h-3V365h-2V354h-2V359h-3V354h-1V355h-1V364h-2V354h-3V364h-3V356h-2V358h-3V356h-3V354h-1V362h-1V363h-1V355h-5V365h-1V354h-1V351h-4V355h-3V349h-3V357h-1V362h-2V357h-2V363h-3V365h-2V361h-1V353h-2V357h-2V353h-3V354h-3V355h-3V359h-1V365h-1V354h-7V361h-3V353h-2V364h-3V353h-3V365h-3V357h-2V360h-2V361h-2V360h-2V358h-7V361h-4V364h-2V358h-1V354h-6V363h-1V354h-1V363h-3V354h-3V365h-3V354h-6V353h-4V356h-3V358h-3V355h-4V359h-2V364h-3V355h-4V357h-2V349h-3V350h-2V359h-1V358h-3V356h-4V361h-2V352h-2V361h-2V349h-3V358h-3V350h-3V363h-2V360h-2V363h-2V351h-1V358h-1V359h-2V350h-3V361h-2V350h-5V354h-3V360h-2V359h-3V354h-2V356h-4V361h-1V352h-1V353h-3V359h-3V357h-2V355h-4V361h-1V363h-2V361h-2V358h-1V349h-4V355h-2V350h-2V355h-3V358h-1V351h-2V357h-2V363h-2V358h-3V356h-3V358h-3V352h-3V354h-3V353h-2V349h-2V353h-4V352h-3V355h-1V350h-2V352h-2V350h-7V362h-3V354h-3V353h-3V356h-2V353h-2V351h-3V350h-1V355h-4V360h-2V352h-2V351h-3V350h-3V349h-2V352h-2V353h-4V352h-2V350h-2V356h-2V352h-3V349h-2V350h-3V354h-4V352h-4V368h-4V367h-2V369h-2V355h-3V365h-3V355h-3V358h-2V356h-5V370h-3V365h-2V369h-4V366h-5V365h-3V370h-3V366h-3V361h-4V358h-2V370h-2V366h-2V356h-4V368h-1V366h-4V360h-3V359h-2V369h-2V358h-1V356h-3V367h-1V356h-1V367h-2V358h-1V362h-4V359h-2V355h-3V356h-3V357h-4V359h-4V355h-1V367h-2V358h-2V367h-3V359h-2V356h-1V358h-4V361h-2V367h-3V357h-2V365h-3V367h-3V366h-1V363h-1V358h-2V367h-2V368h-3V356h-3V367h-2V355h-3V366h-2V361h-3V355h-4V356h-1V362h-4V366h-2V367h-2V356h-3V370h-3V357h-3V367h-1V359h-2V368h-2V361h-1V356h-2V355h-3V367h-3V368h-3V364h-4V355h-3V365h-1V359h-1V358h-1V365h-1V366h-1V356h-2V368h-2V367h-3V366h-1V368h-3V367h-2V368h-3V366h-4V355h-3V367h-3V366h-2V370h-4V369h-1V370h-3V363h-3V367h-2V366h-2V364h-2V356h-2V362h-3V364h-1V366h-1V355h-4V368h-1V362h-3V361h-3V359h-3V363h-1V355h-7V368h-3V358h-3V365h-4V359h-1V356h-2V366h-2V368h-3V367h-1V366h-2V361h-3V370h-3V361h-2V366h-1V355h-2V357h-1V361h-4V356h-2V366h-3V355h-2V367h-2V366h-2V370h-3V359h-3V366h-2V357h-3V347h-6V348h-3V357h-5V349h-1V350h-3V348h-8V347h-1V348h-3V352h-3V348h-2V351h-2V349h-2V352h-2V349h-2V347h-3V351h-3V347h-3V349h-3V346h-2V353h-3V346h-3V347h-3V349h-2V347h-5V362h-1V354h-3V347h-10V353h-4V347h-3V354h-1V349h-4V353h-3V348h-4V347h-7V349h-3V354h-4V351h-4V352h-2V361h-2V347h-3V350h-2V349h-2V348h-1V353h-1V349h-1V352h-1V359h-2V352h-3V347h-1V352h-3V349h-4V352h-3V353h-4V352h-3V349h-4V354h-3V364h-1V354h-3V349h-3V347h-3V349h-2V361h-2V349h-3V347h-3V348h-3V354h-7V349h-1V350h-2V349h-3V347h-1V349h-3V347h-3V363h-3V350h-1V354h-3V349h-2V364h-2V352h-4V349h-3V347h-4V348h-2V351h-3V349h-3V350h-5V354h-2V349h-3V354h-5V347h-1V348h-3V347h-3V348h-3V351h-3V350h-2V355h-3V350h-1V351h-3V349h-3V351h-3V348h-8V351h-3V354h-2V349h-2V352h-4V351h-2V354h-1V347h-4V353h-2V347h-6V353h-3V349h-1V347h-1V343h-1Z" fill="#6464d3"/><path d="M787 458V451h1V446h1V444h1V443h4V446h5V449h1V442h3V443h1V448h2V443h2V449h3V445h4V446h3V443h4V446h4V448h6V442h6V447h4V449h3V443h5V449h3V441h1V445h1V442h1V445h3V447h4V449h3V443h3V447h2V444h3V448h1V447h3V444h3V446h2V449h3V443h4V446h1V444h4V449h2V447h3V432h2V449h5V432h2V447h1V446h7V443h3V449h2V445h1V448h2V449h3V448h2V445h7V434h2V446h3V447h3V449h3V447h2V449h5V435h1V448h2V444h3V446h2V448h3V435h1V449h2V444h2V445h1V442h2V447h2V446h1V443h3V444h3V449h7V448h2V433h2V442h2V448h3V444h4V445h1V448h2V445h4V449h2V443h4V449h1V435h3V447h3V435h1V448h2V445h2V449h4V448h2V443h2V449h4V448h3V449h3V435h1V448h3V434h2V447h3V448h3V434h1V446h1V444h4V448h2V450h2V449h4V435h1V447h3V449h2V447h4V446h2V449h2V447h4V449h3V438h2V447h3V443h2V447h3V442h4V450h2V449h3V428h2V430h2V441h4V427h2V431h4V440h3V427h2V435h3V438h3V429h1V428h2V429h2V430h4V431h3V430h1V440h3V441h3V428h3V440h2V437h2V432h2V430h3V435h4V441h2V433h4V441h1V439h4V427h3V429h3V427h3V438h3V426h5V429h1V427h1V430h2V439h3V429h1V439h2V429h3V434h4V435h1V428h4V427h2V438h3V440h9V439h4V433h1V440h2V428h3V430h3V428h2V434h3V439h3V430h1V429h1V431h3V441h2V440h2V431h2V437h3V428h2V437h1V433h4V439h1V435h4V436h4V439h2V435h4V429h1V426h1V429h2V441h1V433h5V431h4V438h2V435h3V437h4V434h3V436h2V434h4V432h3V434h4V428h2V438h1V431h3V435h2V440h3V439h4V429h2V436h2V433h3V430h2V441h2V429h3V436h3V428h2V441h4V438h2V429h3V439h1V441h2V434h5V430h2V432h3V428h1V441h1V430h3V431h2V441h1V438h3V439h4V434h3V441h3V430h1V428h4V429h2V441h3V430h2V427h3V441h1V429h2V430h2V440h6V437h4V432h3V431h1V436h3V438h1V447h4V444h2V437h2V444h3V445h2V439h3V446h2V434h2V443h3V445h1V436h1V447h3V436h1V447h8V444h1V435h2V434h2V433h3V440h4V442h3V447h2V439h4V436h1V445h3V439h4V447h3V442h2V436h3V443h3V445h2V446h3V441h3V445h5V444h3V441h2V440h2V439h4V442h1V435h2V434h3V437h2V447h3V442h3V446h3V434h2V439h2V436h2V447h1V433h2V441h3V445h2V447h3V436h2V440h3V443h2V436h3V434h2V442h2V435h2V433h3V443h3V435h2V446h3V442h3V443h3V437h1V445h4V446h1V435h2V443h1V445h3V447h3V446h2V447h3V446h5V442h3V433h3V440h3V441h3V436h4V432h3V430h1V440h3V432h2V438h2V437h1V436h4V431h5V435h2V437h1V433h2V442h3V431h3V438h2V442h3V440h2V438h4V429h4V443h4V436h1V432h2V440h3V442h4V440h2V438h3V437h1V442h2V430h2V442h3V437h2V440h3V439h4V440h4V432h4V438h3V430h1V441h4V439h3V431h7V447h2V449h4V447h2V434h3V443h5V440h1V436h2V435h4V440h5V429h3V433h2V440h3V430h1V439h2V441h2V431h2V430h6V441h2V431h4V433h1V441h4V440h1V430h3V440h2V432h6V433h4V438h2V442h3V438h2V439h3V442h4V437h2V439h3V438h2V430h3V431h1V436h4V437h1V441h3V430h1V432h1V430h3V436h2V432h6V442h4V429h2V432h2V442h2V430h2V441h4V443h4V436h4V430h3V442h2V433h2V443h2V442h3V435h4V437h1V441h1V442h2V437h5V431h1V436h4V438h1V441h3V433h2V432h2V441h4V439h3V429h4V441h2V435h2V442h4V431h3V442h3V437h3V431h4V434h3V441h1V433h2V431h6V429h2V442h7V435h2V430h3V440h2V442h3V436h2V442h4V435h3V439h2V433h5V442h2V432h2V431h3V442h2V432h3V435h3V436h4V439h5V440h1V434h4V436h3V431h3V432h3V442h4V431h2V442h2V440h4V438h2V432h3V442h4V441h2V439h4V435h3V440h4V437h4V442h4V432h5V442h2V438h3V431h1V438h2V443h1V436h1V442h3V438h3V435h2V431h2V440h3V442h3V441h2V436h3V434h2V438h3V432h2V435h3V436h1V433h3V435h3V441h4V432h2V435h3V440h3V435h2V434h2V432h2V433h2V436h3V433h1V434h1V441h5V433h1V431h1V437h3V433h1V439h3V435h2V432h3V434h3V435h2V438h3V432h2V442h2V473h-4V477h-4V475h-4V482h-2V474h-4V485h-2V473h-1V476h-1V485h-2V472h-3V486h-3V483h-1V476h-4V474h-7V473h-4V474h-4V486h-3V472h-8V482h-4V474h-4V480h-1V474h-4V473h-4V481h-4V479h-6V483h-2V476h-3V486h-2V483h-3V482h-1V474h-1V480h-2V484h-3V478h-3V479h-4V484h-2V475h-2V482h-1V476h-1V477h-3V478h-1V485h-1V475h-3V476h-4V473h-3V485h-3V476h-6V472h-2V473h-2V483h-2V474h-1V478h-1V483h-1V480h-2V479h-2V483h-3V478h-1V483h-3V474h-2V480h-1V474h-2V481h-1V482h-3V483h-1V472h-3V485h-3V472h-3V484h-3V482h-6V484h-1V472h-1V476h-2V486h-2V483h-2V484h-1V474h-4V483h-4V480h-3V483h-2V473h-1V484h-2V477h-4V483h-1V482h-3V475h-2V484h-1V474h-1V475h-2V481h-1V473h-3V483h-3V473h-3V483h-2V473h-3V475h-2V474h-3V475h-2V472h-3V483h-7V485h-3V483h-1V474h-4V476h-1V475h-2V472h-4V474h-2V473h-4V483h-2V475h-3V479h-3V473h-4V480h-1V483h-1V484h-3V478h-4V482h-3V472h-1V477h-3V473h-2V482h-2V479h-3V482h-3V475h-3V477h-3V473h-3V484h-1V483h-1V484h-2V485h-2V479h-4V475h-2V481h-3V477h-1V483h-1V481h-4V484h-2V472h-1V477h-4V478h-4V485h-6V483h-2V473h-7V485h-1V472h-3V480h-2V484h-1V479h-1V474h-2V484h-4V483h-2V473h-3V478h-3V483h-2V485h-7V483h-4V476h-2V474h-3V482h-3V485h-2V473h-3V474h-2V479h-4V474h-3V483h-2V476h-3V481h-2V473h-3V481h-2V468h-4V466h-3V471h-1V472h-3V477h-1V478h-1V484h-2V483h-2V477h-2V484h-1V475h-3V485h-3V472h-4V479h-4V473h-4V483h-4V484h-2V480h-6V486h-4V474h-3V481h-4V482h-5V473h-2V482h-3V481h-2V476h-3V474h-2V473h-3V482h-3V477h-2V484h-3V476h-2V482h-3V476h-2V474h-3V473h-4V483h-2V480h-2V485h-1V475h-1V482h-4V484h-3V481h-2V485h-1V475h-2V470h-2V471h-4V472h-2V478h-1V469h-2V479h-1V478h-2V477h-2V478h-1V469h-4V468h-1V469h-1V477h-2V474h-3V468h-3V476h-4V474h-2V480h-3V469h-3V470h-4V471h-1V468h-1V469h-2V468h-1V470h-4V482h-2V470h-3V482h-2V468h-3V477h-4V476h-3V482h-2V474h-2V469h-1V481h-3V474h-3V475h-1V472h-4V481h-2V471h-2V475h-1V473h-2V474h-1V476h-1V475h-4V479h-2V481h-2V473h-2V478h-3V468h-3V477h-2V468h-6V475h-3V474h-3V476h-4V474h-3V470h-7V481h-1V479h-1V482h-2V481h-2V479h-2V473h-2V477h-4V468h-4V476h-4V477h-2V481h-2V468h-3V469h-3V480h-1V471h-8V479h-1V473h-3V472h-2V481h-3V471h-4V477h-2V468h-2V479h-2V481h-3V475h-1V476h-2V475h-1V483h-1V485h-1V489h-4V480h-3V485h-2V486h-1V488h-2V477h-2V480h-3V487h-2V480h-3V489h-3V487h-2V486h-1V485h-2V482h-3V486h-2V483h-4V474h-2V485h-1V486h-4V489h-2V475h-4V474h-3V487h-2V481h-3V488h-3V478h-2V489h-1V478h-2V475h-3V479h-4V480h-1V487h-2V480h-4V474h-2V477h-1V475h-2V486h-1V474h-5V482h-4V486h-1V476h-4V485h-3V478h-1V479h-3V476h-1V487h-2V484h-2V481h-3V480h-4V474h-1V477h-3V474h-2V476h-2V475h-4V476h-3V485h-2V480h-1V486h-2V475h-3V479h-3V487h-1V488h-2V474h-3V484h-4V476h-3V475h-2V477h-1V482h-1V476h-3V487h-2V486h-4V474h-2V486h-2V489h-5V487h-1V486h-2V480h-3V485h-3V474h-2V485h-2V475h-6V489h-3V481h-2V486h-3V487h-2V475h-2V485h-7V483h-5V476h-3V478h-3V483h-1V478h-4V484h-3V481h-2V474h-3V482h-3V486h-3V483h-2V487h-3V477h-2V475h-2V488h-3V487h-3V480h-4V486h-4V478h-2V475h-2V476h-2V489h-2V477h-2V478h-4V479h-1V483h-2V479h-2V486h-2V483h-2V486h-1V485h-4V475h-1V486h-3V487h-2V488h-2V475h-4V485h-5V483h-4V482h-1V483h-4V467h-4V468h-2V472h-1V466h-4V478h-1V469h-3V466h-4V467h-1V472h-4V468h-3V470h-3V467h-3V478h-3V466h-2V469h-4V478h-2V469h-1V480h-2V468h-3V473h-2V477h-2V468h-1V465h-3V481h-3V468h-4V471h-2V467h-1V473h-2V467h-6V470h-3V468h-1V471h-2V473h-3V470h-4V472h-4V470h-7V468h-4V483h-1V467h-2V466h-3V477h-2V480h-3V468h-3V469h-1V470h-4V467h-2V466h-5V467h-2V468h-2V466h-2V471h-3V472h-1V473h-2V467h-3V468h-2V466h-5V472h-2V468h-3V483h-1V466h-3V470h-2V467h-4V480h-2V478h-3V473h-3V472h-4V466h-1V467h-3V466h-4V470h-3V468h-3V481h-1V469h-2V472h-2V466h-1V480h-2V473h-4V472h-2V482h-2V470h-1V473h-3V470h-4V472h-2V468h-14V472h-2V473h-2V466h-2V468h-2V467h-3V466h-2V468h-3V467h-4V470h-4V466h-2V467h-3V468h-1V466h-2V474h-2V471h-4V472h-2V468h-2V466h-3V471h-2V470h-2V473h-1V468h-4V469h-3V472h-2V470h-3V471h-3V468h-2V472h-7V466h-2V470h-2V469h-3V473h-4V468h-2V466h-2V470h-1V469h-1V467h-1V464h-1Z" fill="#6464d3"/></svg>
<div class="a" style="left:778px;top:396px;width:1440px;height:2px;background:#111"></div>
<div class="a" style="left:1046.3px;top:252px;width:2px;height:262px;background:#1a1a1a"></div>
<div class="t" style="left:792px;top:256px;font-size:21.6px;line-height:21.6px;color:#23232b">Backseat Dreams</div>
<svg style="left:2170px;top:262px" width="34" height="12"><g fill="#111"><path d="M4 2 L5.2 4.8 L8 6 L5.2 7.2 L4 10 L2.8 7.2 L0 6 L2.8 4.8 Z"/><path d="M14.5 2 L15.7 4.8 L18.5 6 L15.7 7.2 L14.5 10 L13.3 7.2 L10.5 6 L13.3 4.8 Z"/><path d="M25 2 L26.2 4.8 L29 6 L26.2 7.2 L25 10 L23.8 7.2 L21 6 L23.8 4.8 Z"/></g></svg>

<!-- vertical ruler -->
<div class="t" style="left:720px;width:49px;text-align:right;top:285px;font-size:19.4px;line-height:19.4px;font-weight:bold;color:#222">1.0</div>
<div class="t" style="left:720px;width:49px;text-align:right;top:331px;font-size:19.4px;line-height:19.4px;font-weight:bold;color:#222">0.0</div>
<div class="t" style="left:720px;width:49px;text-align:right;top:373px;font-size:19.4px;line-height:19.4px;font-weight:bold;color:#222">-1.0</div>
<div class="t" style="left:720px;width:49px;text-align:right;top:403px;font-size:19.4px;line-height:19.4px;font-weight:bold;color:#222">1.0</div>
<div class="t" style="left:720px;width:49px;text-align:right;top:450px;font-size:19.4px;line-height:19.4px;font-weight:bold;color:#222">0.0</div>
<div class="t" style="left:720px;width:49px;text-align:right;top:495.5px;font-size:19.4px;line-height:19.4px;font-weight:bold;color:#222">-1.0</div>
<div class="a" style="left:773px;top:307.5px;width:6px;height:2px;background:#111"></div>
<div class="a" style="left:768px;top:337px;width:12px;height:3px;background:#111"></div>
<div class="a" style="left:773px;top:366px;width:6px;height:2px;background:#111"></div>
<div class="a" style="left:773px;top:427.5px;width:6px;height:2px;background:#111"></div>
<div class="a" style="left:769px;top:457px;width:10px;height:2px;background:#111"></div>
<div class="a" style="left:773px;top:486.5px;width:6px;height:2px;background:#111"></div>

<!-- track controls -->
<svg style="left:475px;top:263px" width="17" height="15"><path d="M1.5 1 L15.5 14 M15.5 1 L1.5 14" stroke="#333" stroke-width="1.8"/></svg>
<div class="t" style="left:504px;top:259px;font-size:22.5px;line-height:22.5px;color:#23232b">Backseat Dre...</div>
<svg style="left:663px;top:264px" width="18" height="12"><path d="M1.5 10 L9 2.5 L16.5 10" fill="none" stroke="#333" stroke-width="1.8"/></svg>
<svg style="left:692px;top:268px" width="24" height="6"><rect x="1" y="1" width="3.6" height="3.6" fill="#333"/><rect x="9.2" y="1" width="3.6" height="3.6" fill="#333"/><rect x="17.4" y="1" width="3.6" height="3.6" fill="#333"/></svg>
<div class="a" style="left:469.5px;top:288px;width:119.5px;height:30.5px;background:#c3d0e2;border-radius:6px"></div>
<div class="a" style="left:597px;top:288px;width:120px;height:30.5px;background:#c3d0e2;border-radius:6px"></div>
<div class="a" style="left:469.5px;top:326.5px;width:248px;height:37.5px;background:#c3d0e2;border-radius:6px"></div>
<div class="t" style="left:469.5px;width:119.5px;text-align:center;top:294px;font-size:22.2px;line-height:22.2px;color:#23232b">Mute</div>
<div class="t" style="left:597px;width:120px;text-align:center;top:294px;font-size:22.2px;line-height:22.2px;color:#23232b">Solo</div>
<div class="t" style="left:469.5px;width:248px;text-align:center;top:335.2px;font-size:22.4px;line-height:22.4px;color:#23232b">Effects</div>
<!-- gain slider -->
<div class="a" style="left:480px;top:375px;width:8px;height:2px;background:#333"></div>
<svg style="left:694px;top:371px" width="10" height="10"><path d="M4.5 0 V10 M0 5 H9" stroke="#333" stroke-width="2"/></svg>
<div class="a" style="left:481.8px;top:386px;width:1.5px;height:8px;background:#c6cfdc"></div>
<div class="a" style="left:499.0px;top:388px;width:1.5px;height:6px;background:#c6cfdc"></div>
<div class="a" style="left:516.2px;top:388px;width:1.5px;height:6px;background:#c6cfdc"></div>
<div class="a" style="left:533.4px;top:388px;width:1.5px;height:6px;background:#c6cfdc"></div>
<div class="a" style="left:550.6px;top:388px;width:1.5px;height:6px;background:#c6cfdc"></div>
<div class="a" style="left:567.8px;top:388px;width:1.5px;height:6px;background:#c6cfdc"></div>
<div class="a" style="left:585.0px;top:388px;width:1.5px;height:6px;background:#c6cfdc"></div>
<div class="a" style="left:602.2px;top:388px;width:1.5px;height:6px;background:#c6cfdc"></div>
<div class="a" style="left:619.4px;top:388px;width:1.5px;height:6px;background:#c6cfdc"></div>
<div class="a" style="left:636.6px;top:388px;width:1.5px;height:6px;background:#c6cfdc"></div>
<div class="a" style="left:653.8px;top:388px;width:1.5px;height:6px;background:#c6cfdc"></div>
<div class="a" style="left:671.0px;top:388px;width:1.5px;height:6px;background:#c6cfdc"></div>
<div class="a" style="left:688.2px;top:388px;width:1.5px;height:6px;background:#c6cfdc"></div>
<div class="a" style="left:705.4px;top:386px;width:1.5px;height:8px;background:#c6cfdc"></div>
<div class="a" style="left:481.8px;top:438.5px;width:1.5px;height:8px;background:#c6cfdc"></div>
<div class="a" style="left:499.0px;top:440.5px;width:1.5px;height:6px;background:#c6cfdc"></div>
<div class="a" style="left:516.2px;top:440.5px;width:1.5px;height:6px;background:#c6cfdc"></div>
<div class="a" style="left:533.4px;top:440.5px;width:1.5px;height:6px;background:#c6cfdc"></div>
<div class="a" style="left:550.6px;top:440.5px;width:1.5px;height:6px;background:#c6cfdc"></div>
<div class="a" style="left:567.8px;top:440.5px;width:1.5px;height:6px;background:#c6cfdc"></div>
<div class="a" style="left:585.0px;top:440.5px;width:1.5px;height:6px;background:#c6cfdc"></div>
<div class="a" style="left:602.2px;top:440.5px;width:1.5px;height:6px;background:#c6cfdc"></div>
<div class="a" style="left:619.4px;top:440.5px;width:1.5px;height:6px;background:#c6cfdc"></div>
<div class="a" style="left:636.6px;top:440.5px;width:1.5px;height:6px;background:#c6cfdc"></div>
<div class="a" style="left:653.8px;top:440.5px;width:1.5px;height:6px;background:#c6cfdc"></div>
<div class="a" style="left:671.0px;top:440.5px;width:1.5px;height:6px;background:#c6cfdc"></div>
<div class="a" style="left:688.2px;top:440.5px;width:1.5px;height:6px;background:#c6cfdc"></div>
<div class="a" style="left:705.4px;top:438.5px;width:1.5px;height:8px;background:#c6cfdc"></div>
<div class="a" style="left:480px;top:393px;width:229px;height:4px;background:#c5d0de;border-radius:2px"></div>
<div class="a" style="left:583px;top:382.5px;width:21px;height:21px;background:#f5f5f3;border:2px solid #2c2c2c;border-radius:50%"></div>
<!-- pan slider -->
<div class="t" style="left:480px;top:420px;font-size:16px;line-height:16px;font-weight:bold;color:#333">L</div>
<div class="t" style="left:691px;top:420px;font-size:16px;line-height:16px;font-weight:bold;color:#333">R</div>
<div class="a" style="left:480px;top:446px;width:229px;height:4px;background:#c5d0de;border-radius:2px"></div>
<div class="a" style="left:583px;top:435px;width:21px;height:21px;background:#f5f5f3;border:2px solid #2c2c2c;border-radius:50%"></div>

<!-- cursor -->
<svg style="left:0;top:0" width="1000" height="500"><g stroke-linecap="square"><path d="M903.5 399.5 L911 407 M924.5 399.5 L917 407 M911 450 L903.5 457.5 M917 450 L924.5 457.5" stroke="#fff" stroke-width="6.5"/><rect x="909" y="404.5" width="10" height="48" fill="#fff"/><path d="M903.5 399.5 L911 407 M924.5 399.5 L917 407 M911 450 L903.5 457.5 M917 450 L924.5 457.5" stroke="#000" stroke-width="3.2"/><rect x="911" y="406" width="6" height="45" fill="#000"/></g></svg>

<!-- BOTTOM TOOLBAR -->
<div class="a" style="left:0;top:1265px;width:2256px;height:114px;background:#f7f7f7"></div>
<div class="a" style="left:0;top:1379px;width:2256px;height:2px;background:#d9d9d9"></div>
<div class="a" style="left:0;top:1381px;width:2256px;height:38px;background:#f0f0f0"></div>

<div class="grip" style="left:5px;top:1310px"></div>
<div class="t" style="left:30px;top:1288px;font-size:21.5px;line-height:21.5px;color:#222">Tempo</div>
<div class="t" style="left:146px;top:1288px;font-size:21.4px;line-height:21.4px;color:#222">Time Signature</div>
<div class="a inp" style="left:31px;top:1322px;width:72px;height:38px"></div>
<div class="t" style="left:42px;top:1331px;font-size:19px;line-height:19px;color:#222">120</div>
<div class="a spn" style="left:107.5px;top:1323px;width:24px;height:15.5px"></div>
<div class="a spn" style="left:107.5px;top:1342px;width:24px;height:15.5px"></div>
<svg style="left:114px;top:1327px" width="12" height="30"><path d="M1 7 H11 L6 1.5 Z M1 16.5 H11 L6 22 Z" fill="#111"/></svg>
<div class="a inp" style="left:147px;top:1322px;width:54px;height:38px"></div>
<div class="t" style="left:155px;top:1331px;font-size:19px;line-height:19px;color:#222">4</div>
<div class="a spn" style="left:205.5px;top:1323px;width:24.5px;height:15.5px"></div>
<div class="a spn" style="left:205.5px;top:1342px;width:24.5px;height:15.5px"></div>
<svg style="left:212px;top:1327px" width="12" height="30"><path d="M1 7 H11 L6 1.5 Z M1 16.5 H11 L6 22 Z" fill="#111"/></svg>
<svg style="left:240px;top:1329px" width="12" height="22"><path d="M9.5 1 L2.5 21" stroke="#333" stroke-width="2.2"/></svg>
<div class="a" style="left:260px;top:1321px;width:85px;height:38.5px;background:#fff;border:1.5px solid #dadada;border-radius:3px"></div>
<div class="t" style="left:265px;top:1331px;font-size:19px;line-height:19px;color:#222">4</div>
<svg style="left:323px;top:1336px" width="16" height="10"><path d="M1 1.5 L7.5 8 L14 1.5" fill="none" stroke="#444" stroke-width="1.6"/></svg>
<div class="grip" style="left:370px;top:1310px"></div>
<div class="a" style="left:394px;top:1285px;width:21.5px;height:22px;border:1.7px solid #333;border-radius:4px;background:#fdfdfd"></div>
<div class="t" style="left:421px;top:1287px;font-size:20.8px;line-height:20.8px;color:#222">Snap</div>
<div class="a" style="left:394px;top:1321px;width:270px;height:38.5px;background:#fff;border:1.5px solid #c9c9c9;border-radius:3px"></div>
<div class="a" style="left:401px;top:1326px;width:221px;height:28px;background:#ececec"></div>
<div class="t" style="left:402px;top:1331px;font-size:19px;line-height:19px;color:#8c8c8c">1/8</div>
<svg style="left:628px;top:1336px" width="16" height="10"><path d="M1 1.5 L7.5 8 L14 1.5" fill="none" stroke="#aaa" stroke-width="1.6"/></svg>
<!-- right side toolbar lines -->
<div class="a" style="left:1821px;top:1321px;width:435px;height:1.5px;background:#e2e2e2"></div>
<div class="a" style="left:1859.5px;top:1268px;width:1px;height:53px;background:#dedede"></div>
<div class="a" style="left:1863.5px;top:1268px;width:1px;height:53px;background:#dedede"></div>
<svg style="left:1832px;top:1277px" width="12" height="12"><path d="M6 1 V11 M1 6 H11" stroke="#111" stroke-width="1.8"/></svg>
<!-- status bar -->
<div class="a" style="left:16.5px;top:1384px;width:1.5px;height:35px;background:#d6d6d6"></div>
<div class="a" style="left:315px;top:1384px;width:1.5px;height:35px;background:#d6d6d6"></div>
<div class="a" style="left:1943px;top:1384px;width:1.5px;height:35px;background:#d6d6d6"></div>
<div class="t" style="left:25px;top:1392px;font-size:20.2px;line-height:20.2px;color:#222">Stopped.</div>
<div class="t" style="left:324px;top:1392px;font-size:20.7px;line-height:20.7px;color:#222">Click and drag to select audio</div>


<!-- DIALOG -->
<div class="a" style="left:648px;top:520.5px;width:1175px;height:900px;border-radius:9px 9px 0 0;background:rgba(0,0,0,0.35);box-shadow:0 4px 36px rgba(0,0,0,0.16)"></div>
<div class="a" style="left:619px;top:525.5px;width:30px;height:900px;background:linear-gradient(90deg,rgba(0,0,0,0),rgba(0,0,0,0.08))"></div>
<div class="a" style="left:1821.5px;top:525.5px;width:30px;height:900px;background:linear-gradient(90deg,rgba(0,0,0,0.15),rgba(0,0,0,0.0))"></div>
<div class="a" style="left:649px;top:521.5px;width:1172.5px;height:898px;background:#f0f0f0;border-radius:8px 8px 0 0;overflow:hidden"><div class="a" style="left:0;top:0;width:1173px;height:54.5px;background:#eff1f4"></div></div>
<div class="t" style="left:664px;top:538.5px;font-size:20.3px;line-height:20.3px;color:#1a1a1a">Limiter - Backseat Dreams</div>
<div class="a" style="left:1612px;top:546.5px;width:15px;height:1.3px;background:#1a1a1a"></div>
<div class="a" style="left:1693px;top:540px;width:15px;height:14.5px;border:1.4px solid #1a1a1a;border-radius:2.5px"></div>
<svg style="left:1774px;top:540px" width="16" height="16"><path d="M0.8 0.8 L15 15 M15 0.8 L0.8 15" stroke="#1a1a1a" stroke-width="1.3"/></svg>
<div class="a pw" style="left:653px;top:584px;width:38px;height:38px"><svg style="left:0;top:0" width="38" height="38"><path d="M13.2 11.5 A10.7 10.7 0 1 0 24.8 11.5" fill="none" stroke="#fff" stroke-width="2.7" stroke-linecap="round"/><path d="M19 6.5 V18.5" stroke="#fff" stroke-width="2.9" stroke-linecap="round"/></svg></div>
<div class="a" style="left:699px;top:586px;width:196px;height:35.5px;background:#fdfdfd;border:1.5px solid #d3d3d3;border-radius:5px"></div>
<div class="t" style="left:715px;top:594.5px;font-size:20.3px;line-height:20.3px;color:#1a1a1a">Presets &amp; settings</div>
<div class="a" style="left:656.5px;top:661px;width:1157.5px;height:164.5px;border:1.5px solid #dadada;border-radius:3px"></div>
<div class="a" style="left:666px;top:653px;width:190px;height:16px;background:#f0f0f0"></div>
<div class="t" style="left:672.5px;top:651.9px;font-size:20.6px;line-height:20.6px;color:#1a1a1a">Compression curve</div>
<div class="a" style="left:656.5px;top:848px;width:1157.5px;height:118px;border:1.5px solid #dadada;border-radius:3px"></div>
<div class="a" style="left:666px;top:840px;width:115px;height:16px;background:#f0f0f0"></div>
<div class="t" style="left:672.5px;top:838.3px;font-size:21.3px;line-height:21.3px;color:#1a1a1a">Smoothing</div>
<div class="t" style="left:671px;top:689.6px;font-size:20.5px;line-height:20.5px;color:#1a1a1a">Threshold (dB)</div>
<div class="a" style="left:865px;top:683px;width:125px;height:36px;background:#fff;border:1px solid #e6e6e6;border-bottom:2px solid #0067c0;border-radius:3px"></div>
<div class="a" style="left:874.5px;top:687px;width:36px;height:26px;background:#0078d7"></div>
<div class="t" style="left:875px;top:689.1px;font-size:20.6px;line-height:20.6px;color:#fff">-5.0</div>
<div class="a" style="left:910px;top:687px;width:1.5px;height:26px;background:#111"></div>
<div class="a" style="left:1012px;top:699.7px;width:776px;height:6px;background:#e4e4e4;border:1px solid #d4d4d4;border-radius:1.5px"></div>
<svg style="left:1642.5px;top:685.9px" width="20" height="34"><path d="M1.5 1 H18.5 Q19.5 1 19.5 2 V23.5 L10 33 L0.5 23.5 V2 Q0.5 1 1.5 1 Z" fill="#0078d4"/></svg>
<div class="t" style="left:671px;top:737.4px;font-size:20.6px;line-height:20.6px;color:#1a1a1a">Make-up target (dB)</div>
<div class="a" style="left:866px;top:731px;width:122.5px;height:37.5px;background:#fff;border:1px solid #e6e6e6;border-bottom:1.5px solid #868686;border-radius:3px"></div>
<div class="t" style="left:876.5px;top:736.9px;font-size:20.6px;line-height:20.6px;color:#1a1a1a">-1.0</div>
<div class="a" style="left:1012px;top:747px;width:776px;height:6px;background:#e4e4e4;border:1px solid #d4d4d4;border-radius:1.5px"></div>
<svg style="left:1744px;top:733.2px" width="20" height="34"><path d="M1.5 1 H18.5 Q19.5 1 19.5 2 V23.5 L10 33 L0.5 23.5 V2 Q0.5 1 1.5 1 Z" fill="#0078d4"/></svg>
<div class="t" style="left:671px;top:784.1px;font-size:20.6px;line-height:20.6px;color:#1a1a1a">Knee width (dB)</div>
<div class="a" style="left:866px;top:778px;width:122.5px;height:37px;background:#fff;border:1px solid #e6e6e6;border-bottom:1.5px solid #868686;border-radius:3px"></div>
<div class="t" style="left:876.5px;top:783.6px;font-size:20.6px;line-height:20.6px;color:#1a1a1a">2.0</div>
<div class="a" style="left:1012px;top:794.4px;width:776px;height:6px;background:#e4e4e4;border:1px solid #d4d4d4;border-radius:1.5px"></div>
<svg style="left:1163px;top:780.6px" width="20" height="34"><path d="M1.5 1 H18.5 Q19.5 1 19.5 2 V23.5 L10 33 L0.5 23.5 V2 Q0.5 1 1.5 1 Z" fill="#0078d4"/></svg>
<div class="t" style="left:671px;top:877.6px;font-size:20.5px;line-height:20.5px;color:#1a1a1a">Lookahead (ms)</div>
<div class="a" style="left:828px;top:871px;width:122px;height:37px;background:#fff;border:1px solid #e6e6e6;border-bottom:1.5px solid #868686;border-radius:3px"></div>
<div class="t" style="left:838.5px;top:877.1px;font-size:20.6px;line-height:20.6px;color:#1a1a1a">1.0</div>
<div class="a" style="left:973.5px;top:886.4px;width:814.5px;height:6px;background:#e4e4e4;border:1px solid #d4d4d4;border-radius:1.5px"></div>
<svg style="left:1194.5px;top:872.6px" width="20" height="34"><path d="M1.5 1 H18.5 Q19.5 1 19.5 2 V23.5 L10 33 L0.5 23.5 V2 Q0.5 1 1.5 1 Z" fill="#0078d4"/></svg>
<div class="t" style="left:671px;top:924.3px;font-size:20.5px;line-height:20.5px;color:#1a1a1a">Release (ms)</div>
<div class="a" style="left:828px;top:918px;width:122px;height:36.5px;background:#fff;border:1px solid #e6e6e6;border-bottom:1.5px solid #868686;border-radius:3px"></div>
<div class="t" style="left:838.5px;top:923.8px;font-size:20.6px;line-height:20.6px;color:#1a1a1a">20.0</div>
<div class="a" style="left:973.5px;top:933.8px;width:814.5px;height:6px;background:#e4e4e4;border:1px solid #d4d4d4;border-radius:1.5px"></div>
<svg style="left:1191px;top:920.0px" width="20" height="34"><path d="M1.5 1 H18.5 Q19.5 1 19.5 2 V23.5 L10 33 L0.5 23.5 V2 Q0.5 1 1.5 1 Z" fill="#0078d4"/></svg>
<div class="a" style="left:661.5px;top:981px;width:22.5px;height:22.5px;border:1.5px solid #3a3a3a;border-radius:4px;background:#f7f7f7"></div>
<div class="t" style="left:689px;top:982.5px;font-size:21.5px;line-height:21.5px;color:#1a1a1a">Input</div>
<div class="a" style="left:756px;top:981px;width:22.5px;height:22.5px;background:#0067c0;border-radius:4px"></div>
<svg style="left:756px;top:981px" width="23" height="23"><path d="M6.5 11.5 L9.8 14.8 L16.5 8" fill="none" stroke="#fff" stroke-width="1.4"/></svg>
<div class="t" style="left:784px;top:982.5px;font-size:21.5px;line-height:21.5px;color:#1a1a1a">Output</div>
<div class="a" style="left:867.5px;top:981px;width:22.5px;height:22.5px;background:#0067c0;border-radius:4px"></div>
<svg style="left:867.5px;top:981px" width="23" height="23"><path d="M6.5 11.5 L9.8 14.8 L16.5 8" fill="none" stroke="#fff" stroke-width="1.4"/></svg>
<div class="t" style="left:896.5px;top:983.1px;font-size:20.8px;line-height:20.8px;color:#1a1a1a">Actual compression</div>
<div class="a" style="left:1097.5px;top:981px;width:22.5px;height:22.5px;border:1.5px solid #3a3a3a;border-radius:4px;background:#f7f7f7"></div>
<div class="t" style="left:1125.5px;top:983.1px;font-size:20.8px;line-height:20.8px;color:#1a1a1a">Target compression</div>
<div class="a" style="left:657.5px;top:1018px;width:1050.5px;height:401px;background:#2b2c4d"></div>
<div class="t" style="left:1039px;top:1235.3px;font-size:36.3px;line-height:36.3px;color:#8d8d97">awaiting playback</div>
<div class="a" style="left:1717px;top:1018px;width:51.6px;height:401px;background:#2b2c4d"></div>
<div class="a" style="left:1768.6px;top:1017.5px;width:9px;height:1.5px;background:#222"></div>
<div class="t" style="left:1779px;top:1021.5px;font-size:20px;line-height:20px;color:#111">0</div>
<div class="a" style="left:1769px;top:1087.75px;width:5.5px;height:1.5px;background:#333"></div>
<div class="t" style="left:1776.5px;top:1079.1px;font-size:20px;line-height:20px;color:#111;-webkit-text-stroke:0.3px #111">-3</div>
<div class="a" style="left:1769px;top:1160.25px;width:5.5px;height:1.5px;background:#333"></div>
<div class="t" style="left:1776.5px;top:1151.6px;font-size:20px;line-height:20px;color:#111;-webkit-text-stroke:0.3px #111">-6</div>
<div class="a" style="left:1769px;top:1229.25px;width:5.5px;height:1.5px;background:#333"></div>
<div class="t" style="left:1776.5px;top:1220.6px;font-size:20px;line-height:20px;color:#111;-webkit-text-stroke:0.3px #111">-9</div>
<div class="a" style="left:1769px;top:1300.25px;width:5.5px;height:1.5px;background:#333"></div>
<div class="t" style="left:1776.5px;top:1291.6px;font-size:20px;line-height:20px;color:#111;-webkit-text-stroke:0.3px #111">-12</div>
<div class="a" style="left:1769px;top:1371.25px;width:5.5px;height:1.5px;background:#333"></div>
<div class="t" style="left:1776.5px;top:1362.6px;font-size:20px;line-height:20px;color:#111;-webkit-text-stroke:0.3px #111">-15</div>

<!-- WATERMARK -->
<div class="t" style="left:1754px;top:1278px;font-size:35px;line-height:35px;color:rgba(168,168,168,0.85)">Activate Windows</div>
<div class="t" style="left:1756px;top:1325px;font-size:25.7px;line-height:25.7px;color:rgba(168,168,168,0.85)">Go to Settings to activate Windows.</div>
</body></html>
